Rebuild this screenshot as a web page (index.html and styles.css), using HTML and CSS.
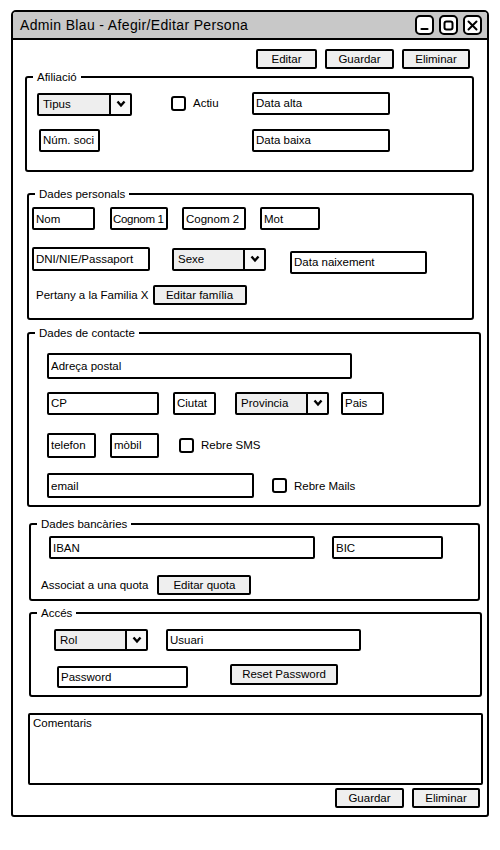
FILE: index.html
```html
<!DOCTYPE html>
<html lang="ca">
<head>
    <meta charset="UTF-8">
    <meta name="viewport" content="width=device-width, initial-scale=1.0">
    <title>Admin Blau - Afegir/Editar Persona</title>
    <link rel="stylesheet" href="styles.css">
</head>
<body>
    <div class="window">
        <div class="titlebar">
            <span class="title">Admin Blau - Afegir/Editar Persona</span>
            <div class="controls">
                <span class="ctl"><svg width="15" height="15" viewBox="0 0 15 15"><path d="M4.5 11h6" stroke="#000" stroke-width="2.2" stroke-linecap="round"/></svg></span>
                <span class="ctl"><svg width="15" height="15" viewBox="0 0 15 15"><rect x="3.5" y="3.5" width="8" height="8" rx="2" fill="none" stroke="#000" stroke-width="2"/></svg></span>
                <span class="ctl"><svg width="15" height="15" viewBox="0 0 15 15"><path d="M3.5 3.5l8 8M11.5 3.5l-8 8" stroke="#000" stroke-width="2" stroke-linecap="round"/></svg></span>
            </div>
        </div>

        <div class="window-body">
            <div class="toolbar">
                <button class="btn b-editar">Editar</button>
                <button class="btn b-guardar">Guardar</button>
                <button class="btn b-eliminar">Eliminar</button>
            </div>

            <!-- Afiliació -->
            <fieldset class="group g-afiliacio">
                <legend>Afiliació</legend>
                <div class="group-body afiliacio-grid">
                    <div class="select s-tipus">
                        <span class="select-label">Tipus</span>
                        <span class="select-arrow"><svg width="10" height="8" viewBox="0 0 10 8"><path d="M1.5 1.5L5 5.5L8.5 1.5" fill="none" stroke="#000" stroke-width="2.4"/></svg></span>
                    </div>
                    <label class="check"><span class="box"></span>Actiu</label>
                    <input class="field f-alta" type="text" placeholder="Data alta">
                    <input class="field f-soci" type="text" placeholder="Núm. soci">
                    <span></span>
                    <input class="field f-baixa" type="text" placeholder="Data baixa">
                </div>
            </fieldset>

            <!-- Dades personals -->
            <fieldset class="group g-personals">
                <legend>Dades personals</legend>
                <div class="group-body">
                    <div class="row r-noms">
                        <input class="field f-nom" type="text" placeholder="Nom">
                        <input class="field f-cognom1" type="text" placeholder="Cognom 1">
                        <input class="field f-cognom2" type="text" placeholder="Cognom 2">
                        <input class="field f-mot" type="text" placeholder="Mot">
                    </div>
                    <div class="row r-dni">
                        <input class="field f-dni" type="text" placeholder="DNI/NIE/Passaport">
                        <div class="select s-sexe">
                            <span class="select-label">Sexe</span>
                            <span class="select-arrow"><svg width="10" height="8" viewBox="0 0 10 8"><path d="M1.5 1.5L5 5.5L8.5 1.5" fill="none" stroke="#000" stroke-width="2.4"/></svg></span>
                        </div>
                        <input class="field f-naixement" type="text" placeholder="Data naixement">
                    </div>
                    <div class="row r-familia">
                        <span class="text t-familia">Pertany a la Familia X</span>
                        <button class="btn b-familia">Editar família</button>
                    </div>
                </div>
            </fieldset>

            <!-- Dades de contacte -->
            <fieldset class="group g-contacte">
                <legend>Dades de contacte</legend>
                <div class="group-body">
                    <div class="row r-adreca">
                        <input class="field f-adreca" type="text" placeholder="Adreça postal">
                    </div>
                    <div class="row r-ciutat">
                        <input class="field f-cp" type="text" placeholder="CP">
                        <input class="field f-ciutat" type="text" placeholder="Ciutat">
                        <div class="select s-provincia">
                            <span class="select-label">Provincia</span>
                            <span class="select-arrow"><svg width="10" height="8" viewBox="0 0 10 8"><path d="M1.5 1.5L5 5.5L8.5 1.5" fill="none" stroke="#000" stroke-width="2.4"/></svg></span>
                        </div>
                        <input class="field f-pais" type="text" placeholder="Pais">
                    </div>
                    <div class="row r-telefon">
                        <input class="field f-telefon" type="text" placeholder="telefon">
                        <input class="field f-mobil" type="text" placeholder="mòbil">
                        <label class="check c-sms"><span class="box"></span>Rebre SMS</label>
                    </div>
                    <div class="row r-email">
                        <input class="field f-email" type="text" placeholder="email">
                        <label class="check c-mails"><span class="box"></span>Rebre Mails</label>
                    </div>
                </div>
            </fieldset>

            <!-- Dades bancàries -->
            <fieldset class="group g-bancaries">
                <legend>Dades bancàries</legend>
                <div class="group-body">
                    <div class="row r-iban">
                        <input class="field f-iban" type="text" placeholder="IBAN">
                        <input class="field f-bic" type="text" placeholder="BIC">
                    </div>
                    <div class="row r-quota">
                        <span class="text t-quota">Associat a una quota</span>
                        <button class="btn b-quota">Editar quota</button>
                    </div>
                </div>
            </fieldset>

            <!-- Accés -->
            <fieldset class="group g-acces">
                <legend>Accés</legend>
                <div class="group-body">
                    <div class="row r-usuari">
                        <div class="select s-rol">
                            <span class="select-label">Rol</span>
                            <span class="select-arrow"><svg width="10" height="8" viewBox="0 0 10 8"><path d="M1.5 1.5L5 5.5L8.5 1.5" fill="none" stroke="#000" stroke-width="2.4"/></svg></span>
                        </div>
                        <input class="field f-usuari" type="text" placeholder="Usuari">
                    </div>
                    <div class="row r-password">
                        <input class="field f-password" type="text" placeholder="Password">
                        <button class="btn b-reset">Reset Password</button>
                    </div>
                </div>
            </fieldset>

            <textarea class="comentaris" placeholder="Comentaris"></textarea>

            <div class="footer">
                <button class="btn b-guardar">Guardar</button>
                <button class="btn b-eliminar">Eliminar</button>
            </div>
        </div>
    </div>
</body>
</html>
```

FILE: styles.css
```css
body {
    margin: 0;
    background: #fff;
    color: #000;
    font-family: "Liberation Sans", Arial, sans-serif;
    font-size: 11.5px;
}
.window {
    width: 478px;
    margin: 10px 0 0 11px;
    border: 2px solid #000;
    border-radius: 5px 5px 3px 3px;
    box-sizing: border-box;
    overflow: hidden;
}
.titlebar {
    display: flex;
    align-items: center;
    justify-content: space-between;
    height: 26px;
    padding: 0 5px 0 7px;
    background: #c8c8c8;
    border-bottom: 2px solid #000;
}
.title {
    font-size: 14px;
    letter-spacing: 0.35px;
}
.controls {
    display: flex;
    gap: 5px;
}
.ctl {
    display: flex;
    align-items: center;
    justify-content: center;
    width: 19px;
    height: 20px;
    border: 2px solid #000;
    border-radius: 5px;
    box-sizing: border-box;
    background: #fff;
}
.window-body {
    padding-bottom: 7px;
}
.toolbar {
    display: flex;
    justify-content: flex-end;
    gap: 8px;
    margin: 9px 17px 1px 0;
}
.btn {
    height: 20px;
    padding: 0;
    border: 2px solid #000;
    border-radius: 2px;
    background: #efefef;
    font-family: inherit;
    font-size: 11.5px;
    color: #000;
}
.b-editar { width: 61px; }
.b-guardar { width: 69px; }
.b-eliminar { width: 68px; }

/* groups */
.group {
    margin: 0;
    padding: 0;
    min-width: 0;
    border: 2px solid #000;
    border-radius: 3px;
}
.group legend {
    margin-left: 6px;
    padding: 0 4px;
    line-height: 14px;
    font-size: 11.5px;
}
.row {
    display: flex;
    align-items: center;
}
.text {
    white-space: nowrap;
}
.field {
    box-sizing: border-box;
    height: 23px;
    margin: 0;
    padding: 0 2px;
    border: 2px solid #000;
    border-radius: 2px;
    background: #fff;
    font-family: inherit;
    font-size: 11.5px;
    color: #000;
    outline: none;
}
.field::placeholder,
.comentaris::placeholder {
    color: #000;
    opacity: 1;
}
.select {
    display: flex;
    box-sizing: border-box;
    height: 23px;
    border: 2px solid #000;
    border-radius: 2px;
}
.select-label {
    flex: 1;
    display: flex;
    align-items: center;
    padding-left: 4px;
    background: #eee;
}
.select-arrow {
    display: flex;
    align-items: center;
    justify-content: center;
    width: 19px;
    border-left: 2px solid #000;
    background: #f8f8f8;
}
.check {
    display: flex;
    align-items: center;
    gap: 7px;
}
.box {
    width: 15px;
    height: 15px;
    border: 2px solid #000;
    border-radius: 3px;
    box-sizing: border-box;
}

/* Afiliació */
.g-afiliacio {
    margin: 0 13px 0 12px;
}
.afiliacio-grid {
    display: grid;
    grid-template-columns: 134px 81px 138px;
    grid-template-rows: 24px 24px;
    row-gap: 13px;
    align-items: center;
    padding: 7px 0 18px 10px;
}
.s-tipus { width: 95px; margin-top: 2px; }
.f-alta, .f-baixa { width: 138px; }
.f-soci { width: 61px; margin-left: 2px; }

/* Dades personals */
.g-personals {
    margin: 15px 13px 0 14px;
}
.g-personals .group-body {
    padding: 6px 0 12px 3px;
}
.r-noms { height: 23px; }
.r-dni { height: 24px; margin-top: 17px; }
.r-familia { height: 22px; margin-top: 13px; }
.f-nom { width: 63px; }
.f-cognom1 { width: 58px; margin-left: 15px; padding: 0 1px; letter-spacing: -0.3px; }
.f-cognom2 { width: 64px; margin-left: 14px; }
.f-mot { width: 60px; margin-left: 14px; }
.f-dni { width: 118px; height: 24px; }
.s-sexe { width: 94px; margin-left: 22px; }
.f-naixement { width: 137px; margin-left: 24px; margin-top: 6px; }
.t-familia { margin-left: 4px; }
.b-familia { width: 94px; margin-left: 4px; }

/* Dades de contacte */
.g-contacte {
    margin: 6px 6px 0 14px;
}
.g-contacte .group-body {
    padding: 13px 0 7px 18px;
}
.r-adreca { height: 26px; }
.r-ciutat { height: 24px; margin-top: 12px; }
.r-telefon { height: 26px; margin-top: 17px; }
.r-email { height: 25px; margin-top: 15px; }
.f-adreca { width: 305px; height: 26px; }
.f-cp { width: 112px; }
.f-ciutat { width: 43px; margin-left: 14px; }
.s-provincia { width: 94px; margin-left: 19px; }
.f-pais { width: 43px; margin-left: 12px; }
.f-telefon, .f-mobil { width: 49px; height: 25px; }
.f-mobil { margin-left: 14px; }
.c-sms { margin-left: 20px; }
.f-email { width: 207px; height: 25px; }
.c-mails { margin-left: 18px; }

/* Dades bancàries */
.g-bancaries {
    margin: 10px 7px 0 16px;
}
.g-bancaries .group-body {
    padding: 5px 0 4px 18px;
}
.r-iban { height: 23px; }
.r-quota { height: 20px; margin-top: 16px; }
.f-iban { width: 266px; }
.f-bic { width: 111px; margin-left: 17px; }
.t-quota { margin-left: -8px; }
.b-quota { width: 94px; margin-left: 9px; }

/* Accés */
.g-acces {
    margin: 5px 5px 0 16px;
}
.g-acces .group-body {
    padding: 9px 0 7px 0;
}
.r-usuari { height: 22px; }
.r-password { height: 25px; margin-top: 12px; }
.s-rol { width: 94px; height: 22px; margin-left: 23px; }
.f-usuari { width: 195px; height: 22px; margin-left: 18px; }
.f-password { width: 131px; height: 22px; margin-left: 26px; margin-top: 3px; }
.b-reset { width: 108px; height: 21px; margin-left: 42px; margin-top: -3px; }

/* Comentaris */
.comentaris {
    display: block;
    box-sizing: border-box;
    width: 455px;
    height: 72px;
    margin: 16px 0 0 15px;
    padding: 2px 3px;
    border: 2px solid #000;
    border-radius: 2px;
    font-family: inherit;
    font-size: 11.5px;
    resize: none;
    outline: none;
}
.footer {
    display: flex;
    justify-content: flex-end;
    gap: 8px;
    margin: 3px 7px 0 0;
}
```
